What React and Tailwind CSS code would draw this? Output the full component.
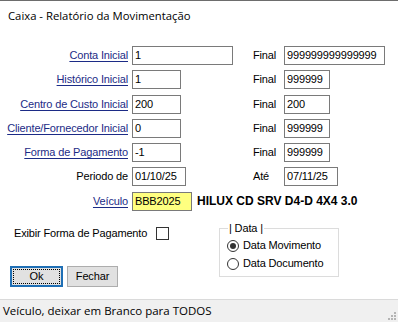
import React, { useState } from 'react';

// fonte estreita usada nos controles do formulário
const estreita = "font-['Liberation_Sans',Arial,sans-serif] text-[11px] tracking-[-0.15px] leading-none whitespace-nowrap";

// campo de texto no estilo Windows clássico
const Campo = ({ valor, largura, amarelo }) => (
  <div
    className={`h-[19px] border border-[#7a7a7a] pl-[2px] flex items-center text-black ${estreita} ${largura} ${amarelo ? 'bg-[#ffff80]' : 'bg-white'}`}
  >
    {valor}
  </div>
);

const Rotulo = ({ texto, link }) => (
  <div className={`pr-[4px] text-right ${estreita}`}>
    {link ? <span className="text-[#1c2b86] underline underline-offset-2">{texto}</span> : <span className="text-black">{texto}</span>}
  </div>
);

const Final = ({ texto = 'Final' }) => <div className={`pl-[3px] text-black ${estreita}`}>{texto}</div>;

const App = () => {
  const [tipoData, setTipoData] = useState('movimento');
  const [exibir, setExibir] = useState(false);

  const linhas = [
    { rotulo: 'Conta Inicial', link: true, ini: '1', larguraIni: 'w-[101px]', fim: '999999999999999', larguraFim: 'w-[101px]' },
    { rotulo: 'Histórico Inicial', link: true, ini: '1', larguraIni: 'w-[49px]', fim: '999999', larguraFim: 'w-[46px]' },
    { rotulo: 'Centro de Custo Inicial', link: true, ini: '200', larguraIni: 'w-[49px]', fim: '200', larguraFim: 'w-[46px]' },
    { rotulo: 'Cliente/Fornecedor Inicial', link: true, ini: '0', larguraIni: 'w-[49px]', fim: '999999', larguraFim: 'w-[46px]' },
    { rotulo: 'Forma de Pagamento', link: true, ini: '-1', larguraIni: 'w-[49px]', fim: '999999', larguraFim: 'w-[46px]' },
    { rotulo: 'Periodo de', link: false, ini: '01/10/25', larguraIni: 'w-[54px]', fim: '07/11/25', larguraFim: 'w-[54px]', ate: true },
  ];

  return (
    <div className="w-[398px] h-[322px] bg-white border-t border-[#6d6d6d] flex flex-col overflow-hidden font-['Open_Sans','Noto_Sans',sans-serif]">
      {/* Título */}
      <div className="pl-[8px] pt-[7px] text-[11.3px] leading-[16px] text-black">Caixa - Relatório da Movimentação</div>

      {/* Campos */}
      <div className="mt-[22px] grid grid-cols-[132px_118px_34px_auto] gap-y-[5.3px] items-center">
        {linhas.map((l) => (
          <React.Fragment key={l.rotulo}>
            <Rotulo texto={l.rotulo} link={l.link} />
            <Campo valor={l.ini} largura={l.larguraIni} />
            <Final texto={l.ate ? 'Até' : 'Final'} />
            <Campo valor={l.fim} largura={l.larguraFim} />
          </React.Fragment>
        ))}
        <Rotulo texto="Veículo" link />
        <div className="col-span-3 flex items-center">
          <Campo valor="BBB2025" largura="w-[60px]" amarelo />
          <span className="ml-[5px] font-['Liberation_Sans',Arial,sans-serif] text-[12px] font-bold text-black leading-none whitespace-nowrap">
            HILUX CD SRV D4-D 4X4 3.0
          </span>
        </div>
      </div>

      {/* Opções e botões */}
      <div className="mt-[16px] flex">
        <div className="w-[219px] pl-[10px] flex flex-col">
          <div className={`pl-[4px] flex items-center h-[13px] text-black ${estreita}`}>
            <span>Exibir Forma de Pagamento</span>
            <button
              onClick={() => setExibir(!exibir)}
              className="ml-[9px] w-[13px] h-[13px] border border-[#333] bg-white flex items-center justify-center text-[10px]"
            >
              {exibir ? '✓' : ''}
            </button>
          </div>
          <div className="mt-[26px] flex gap-[4px]">
            <button className="w-[53px] h-[21px] border-2 border-[#1f6fb5] bg-[#e1e1e1] p-[1px]">
              <div className={`w-full h-full border border-dotted border-black flex items-center justify-center text-black ${estreita}`}>
                Ok
              </div>
            </button>
            <button className={`w-[51px] h-[21px] border border-[#adadad] bg-[#e1e1e1] flex items-center justify-center text-black ${estreita}`}>
              Fechar
            </button>
          </div>
        </div>

        <div className="relative w-[120px] h-[49px] mt-[1px] border border-[#dcdcdc] pl-[7px] pt-[11px] flex flex-col gap-[6px]">
          <span className={`absolute left-[8px] top-[-6px] bg-white px-[1px] text-black ${estreita}`}>| Data |</span>
          {[
            { id: 'movimento', texto: 'Data Movimento' },
            { id: 'documento', texto: 'Data Documento' },
          ].map((r) => (
            <label key={r.id} className={`flex items-center gap-[4px] text-black ${estreita}`} onClick={() => setTipoData(r.id)}>
              <span className="w-[12px] h-[12px] rounded-full border border-[#333] bg-white flex items-center justify-center">
                {tipoData === r.id && <span className="w-[6px] h-[6px] rounded-full bg-[#333]" />}
              </span>
              {r.texto}
            </label>
          ))}
        </div>
      </div>

      {/* Barra de status */}
      <div className="mt-auto h-[23px] bg-[#f0f0f0] border-t border-[#dadada] flex items-center justify-between">
        <span className="pl-[3px] text-[11.5px] text-black">Veículo, deixar em Branco para TODOS</span>
        <svg width="12" height="12" viewBox="0 0 12 12" className="self-end mb-[1px] mr-[1px]">
          {[[9, 3], [6, 6], [9, 6], [3, 9], [6, 9], [9, 9]].map(([x, y]) => (
            <rect key={`${x}-${y}`} x={x} y={y} width="2" height="2" fill="#b4b4b4" />
          ))}
        </svg>
      </div>
    </div>
  );
};

export default App;
